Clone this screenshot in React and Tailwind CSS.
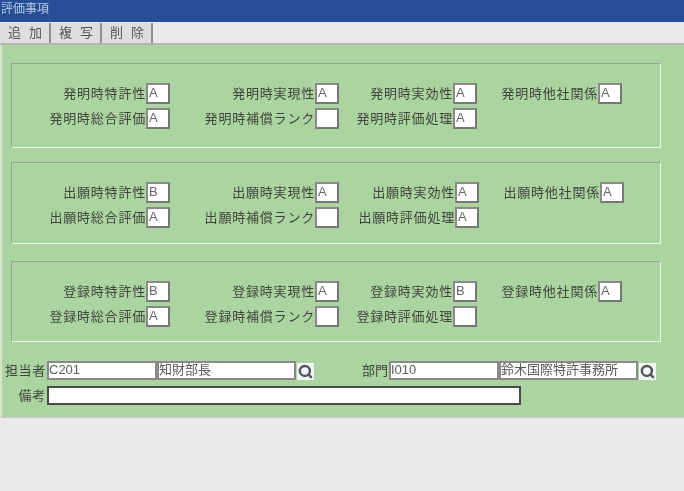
import { Search } from 'lucide-react';

const panels = [
    { prefix: '発明時', box: 'h-[85px] pt-[19px]', cols: 'grid-cols-[158px_169px_138px_145px]', rows: ['A', 'A', 'A', 'A', 'A', '', 'A'] },
    { prefix: '出願時', box: 'h-[82px] mt-[14px] pt-[19px]', cols: 'grid-cols-[158px_169px_140px_145px]', rows: ['B', 'A', 'A', 'A', 'A', '', 'A'] },
    { prefix: '登録時', box: 'h-[81px] mt-[17px] pt-[19px]', cols: 'grid-cols-[158px_169px_138px_145px]', rows: ['B', 'A', 'B', 'A', 'A', '', ''] },
];

const firstRow = ['特許性', '実現性', '実効性', '他社関係'];
const secondRow = ['総合評価', '補償ランク', '評価処理'];

function Field({ label, value }) {
    return (
        <div className="flex items-center justify-end">
            <span className="text-[13px] tracking-[0.8px] text-[#3c443c] whitespace-nowrap">{label}</span>
            <div className="w-[24px] h-[21px] bg-white border-2 border-[#8a8a8a] border-b-[#777] border-r-[#777] text-[13px] leading-[15px] pl-[1px] text-[#666]">
                {value}
            </div>
        </div>
    );
}

function Panel({ prefix, box, cols, rows }) {
    return (
        <div className={`${box} ml-[9px] w-[650px] border border-[#9a9f9a] border-r-[#eef3ec] border-b-[#eef3ec] flex flex-col gap-[4px]`}>
            <div className={`grid ${cols}`}>
                {firstRow.map((l, i) => <Field key={l} label={prefix + l} value={rows[i]} />)}
            </div>
            <div className={`grid ${cols}`}>
                {secondRow.map((l, i) => <Field key={l} label={prefix + l} value={rows[i + 4]} />)}
            </div>
        </div>
    );
}

function Box({ w, children, dark }) {
    return (
        <div className={`${w} h-[19px] bg-white border-2 ${dark ? 'border-[#4a4a4a]' : 'border-[#8a8a8a]'} text-[13px] leading-[14px] text-[#5c5c5c] whitespace-nowrap overflow-hidden`}>
            {children}
        </div>
    );
}

function Lookup() {
    return (
        <div className="w-[17px] h-[17px] mt-[2px] ml-[1px] bg-[#f4f6f4] flex items-center justify-center">
            <Search size={15} strokeWidth={4} className="text-[#4d5a60]" />
        </div>
    );
}

export default function App() {
    return (
        <div className="w-[684px] h-[491px] flex flex-col overflow-hidden bg-[#eae8e8] blur-[0.4px] font-['Liberation_Sans','Noto_Sans_CJK_JP',sans-serif]">
            <div className="h-[22px] bg-[#274f96] text-[#b9c9e4] text-[12px] leading-[19px] pl-[1px] shrink-0">評価事項</div>
            <div className="h-[23px] flex shrink-0 border-b-2 border-[#b5b5b5] pt-[1px]">
                {['追 加', '複 写', '削 除'].map(t => (
                    <div key={t} className="w-[51px] h-[20px] bg-[#dededc] border-r-2 border-[#8f8f8f] text-[13px] tracking-[2.2px] leading-[19px] text-center pl-[3px] text-[#555]">
                        {t}
                    </div>
                ))}
            </div>
            <div className="h-[373px] shrink-0 bg-[#acd4a0] border-l-2 border-l-[#d6e4d1] border-b border-b-[#c9c9c9] pt-[18px]">
                <div className="flex flex-col">
                    {panels.map(p => <Panel key={p.prefix} {...p} />)}
                </div>
                <div className="mt-[19px] flex flex-col gap-[6px] text-[13px] tracking-[0.7px] text-[#3c443c]">
                    <div className="flex">
                        <span className="w-[45px] pr-[1px] text-right leading-[19px] whitespace-nowrap">担当者</span>
                        <Box w="w-[110px]"><span className="tracking-normal">C201</span></Box>
                        <Box w="w-[139px]"><span className="tracking-normal">知財部長</span></Box>
                        <Lookup />
                        <span className="w-[75px] text-right leading-[19px] tracking-normal pr-[1px]">部門</span>
                        <Box w="w-[110px]"><span className="tracking-normal">I010</span></Box>
                        <Box w="w-[139px]"><span className="tracking-normal">鈴木国際特許事務所</span></Box>
                        <Lookup />
                    </div>
                    <div className="flex">
                        <span className="w-[45px] pr-[1px] text-right leading-[19px] whitespace-nowrap">備考</span>
                        <Box w="w-[474px]" dark />
                    </div>
                </div>
            </div>
        </div>
    );
}
